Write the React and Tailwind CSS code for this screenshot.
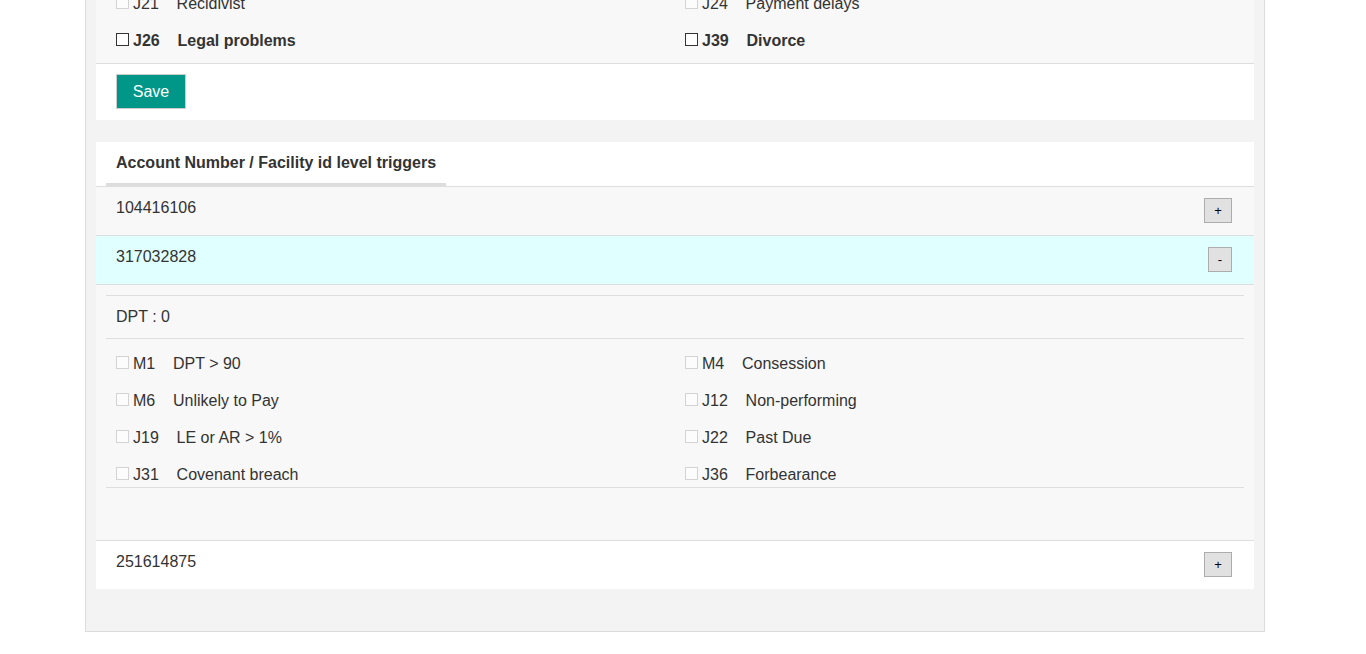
import React from "react";

const Box = ({ dark }) => (
  <span
    className={
      dark
        ? "inline-block w-[13px] h-[13px] border border-[#333] bg-white mr-[4px]"
        : "inline-block w-[13px] h-[13px] border border-[#d3d3d3] bg-[#fcfcfc] mr-[4px]"
    }
  />
);

const Item = ({ code, label, bold, dark }) => (
  <div
    className={
      bold
        ? "pl-[10px] h-[20px] leading-[20px] whitespace-pre font-bold"
        : "pl-[10px] h-[20px] leading-[20px] whitespace-pre"
    }
  >
    <Box dark={dark} />
    {code}
    {"\u00a0\u00a0\u00a0\u00a0"}
    {label}
  </div>
);

const ToggleBtn = ({ sign }) => (
  <button
    className={
      sign === "-"
        ? "w-[24px] h-[25px] text-[13px] leading-[23px] bg-[#e1e1e1] border border-[#adadad] text-black text-center"
        : "w-[28px] h-[25px] text-[13px] leading-[23px] bg-[#e1e1e1] border border-[#adadad] text-black text-center"
    }
  >
    {sign}
  </button>
);

const AccountRow = ({ num, sign, bg }) => (
  <div className={`${bg} h-[49px] border-b border-[#dedede] flex items-start justify-between pt-[11px] pl-[20px] pr-[22px]`}>
    <span className="leading-[20px]">{num}</span>
    <ToggleBtn sign={sign} />
  </div>
);

export default function App() {
  return (
    <div
      className="min-h-[654px] bg-white text-[#333] text-[16px] overflow-hidden"
      style={{ fontFamily: '"Liberation Sans", Arial, sans-serif' }}
    >
      <div className="ml-[85px] w-[1180px] -mt-[20px] border border-[#dcdcdc] bg-[#f3f3f3] px-[10px] pb-[42px]">
        {/* Panel 1 */}
        <div className="bg-white">
          <div className="bg-[#f8f8f8] border-b border-[#dedede] px-[10px] pt-[13px] pb-[12px]">
            <div className="grid grid-cols-2 gap-y-[17px]">
              <Item code="J21" label="Recidivist" />
              <Item code="J24" label="Payment delays" />
              <Item code="J26" label="Legal problems" bold dark />
              <Item code="J39" label="Divorce" bold dark />
            </div>
          </div>
          <div className="pt-[10px] pb-[11px] pl-[20px]">
            <button className="w-[70px] h-[35px] bg-[#009688] border border-[#cccccc] text-white text-[16px] leading-[33px]">
              Save
            </button>
          </div>
        </div>

        {/* Panel 2 */}
        <div className="bg-white mt-[22px]">
          <div className="px-[10px] border-b border-[#dedede]">
            <div className="inline-block px-[10px] pt-[11px] pb-[10px] border-b-[3px] border-[#dddddd] font-bold leading-[20px]">
              Account Number / Facility id level triggers
            </div>
          </div>
          <AccountRow num="104416106" sign="+" bg="bg-[#f8f8f8]" />
          <AccountRow num="317032828" sign="-" bg="bg-[#e0ffff]" />
          <div className="bg-[#f8f8f8] border-b border-[#dedede] pt-[10px] pb-[52px]">
            <div className="mx-[10px] border-t border-b border-[#dedede]">
              <div className="border-b border-[#dedede] pt-[11px] pb-[11px] pl-[10px] leading-[20px]">
                DPT : 0
              </div>
              <div className="grid grid-cols-2 gap-y-[17px] pt-[15px] pb-[2px]">
                <Item code="M1" label="DPT > 90" />
                <Item code="M4" label="Consession" />
                <Item code="M6" label="Unlikely to Pay" />
                <Item code="J12" label="Non-performing" />
                <Item code="J19" label="LE or AR > 1%" />
                <Item code="J22" label="Past Due" />
                <Item code="J31" label="Covenant breach" />
                <Item code="J36" label="Forbearance" />
              </div>
            </div>
          </div>
          <div className="bg-white h-[48px] flex items-start justify-between pt-[11px] pl-[20px] pr-[22px]">
            <span className="leading-[20px]">251614875</span>
            <ToggleBtn sign="+" />
          </div>
        </div>
      </div>
    </div>
  );
}
